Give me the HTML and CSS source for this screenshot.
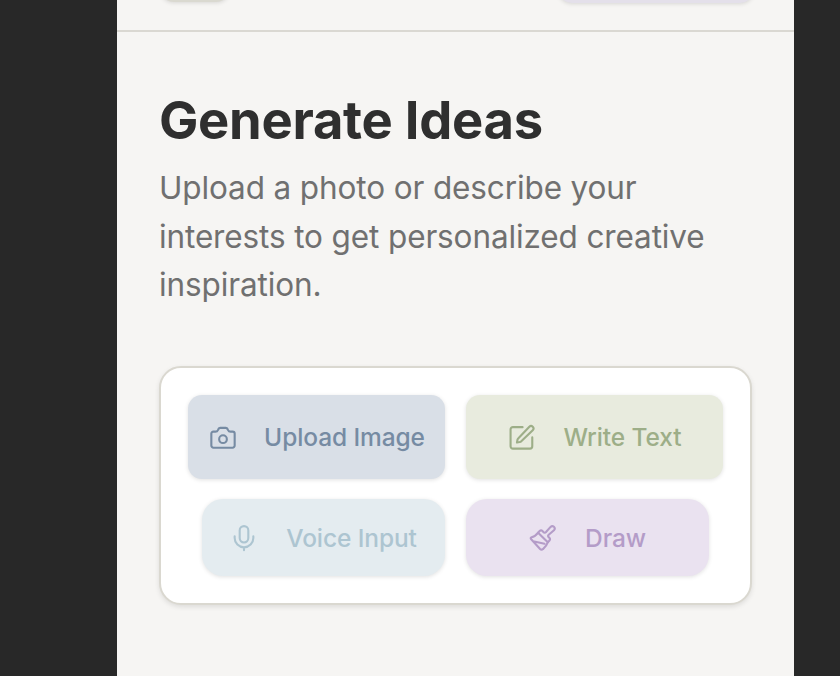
FILE: index.html
```html
<!DOCTYPE html>
<html lang="en">
<head>
<meta charset="utf-8">
<title>Generate Ideas</title>
<link rel="stylesheet" href="styles.css">
</head>
<body>
<div class="app">
  <header class="topbar">
    <div class="chip chip-back"></div>
    <div class="chip chip-action"></div>
  </header>
  <main class="content">
    <h1 class="title">Generate Ideas</h1>
    <p class="intro">Upload a photo or describe your<br>interests to get personalized creative<br>inspiration.</p>
    <section class="card">
      <button class="option upload">
        <svg class="icon" viewBox="0 0 24 24"><path d="M2 8.200A1.700 1.700 0 0 1 3.700 6.500H5.500C6.700 6.500 7.300 6 7.600 5.200C8 4 8.500 3.300 9.500 3.300H14.500C15.500 3.300 16 4 16.400 5.200C16.700 6 17.300 6.500 18.500 6.500H20.300A1.700 1.700 0 0 1 22 8.200V18.500A1.800 1.800 0 0 1 20.200 20.300H3.800A1.800 1.800 0 0 1 2 18.500Z"/><circle cx="12" cy="13" r="3.300"/></svg>
        <span class="label">Upload Image</span>
      </button>
      <button class="option write">
        <svg class="icon" viewBox="0 0 24 24"><path d="M12.500 2.700H4.200A2 2 0 0 0 2.200 4.700V19.100A2 2 0 0 0 4.200 21.100H18.800A2 2 0 0 0 20.800 19.100V11.500"/><path d="M18.300 2.400a2.050 2.050 0 0 1 2.900 2.900L11.400 14.700a3 3 0 0 1-1.400.8l-2.300.4.400-2.300a3 3 0 0 1 .8-1.400Z"/></svg>
        <span class="label">Write Text</span>
      </button>
      <button class="option voice">
        <svg class="icon" viewBox="0 0 24 24"><rect x="8.300" y="1.800" width="7.400" height="14" rx="3.700"/><path d="M4 10.500V12a8 8 0 0 0 16 0V10.500M12 20v2.500"/></svg>
        <span class="label">Voice Input</span>
      </button>
      <button class="option draw">
        <svg class="icon" viewBox="0 0 24 24"><path d="m14.600 6.900 3.900-4.400a1.900 1.900 0 0 1 2.900 2.800l-4.500 3.900a1.500 1.500 0 0 0 0 2.100l.5.500a1.800 1.800 0 0 1 0 2.500l-1.300 1.400-8.300-8.300 1.300-1.300a1.800 1.800 0 0 1 2.500 0l.7.800a1.500 1.500 0 0 0 2.300 0Z"/><path d="M7.800 7.400C6 9.800 4 11 2.200 11.300a.9.900 0 0 0-.5 1.500l7.800 8.600a1.800 1.800 0 0 0 2.500.100c2.300-1.900 3.500-3.800 4.100-5.800M3.500 14.800l9.800 2.100"/></svg>
        <span class="label">Draw</span>
      </button>
    </section>
  </main>
</div>
</body>
</html>
```
FILE: styles.css
```css
* { box-sizing: border-box; }
body { margin: 0; background: #282828; font-family: Inter, sans-serif; }
.app { width: 677px; height: 676px; margin-left: 117px; background: #f6f5f3; overflow: hidden; }
.topbar { height: 32px; padding: 0 42px; display: flex; justify-content: space-between; align-items: flex-start; border-bottom: 2px solid #dad8d2; }
.chip { height: 42px; border-radius: 14px; }
.chip-back { width: 70px; margin: -40px 0 0 1px; background: #dad9d0; box-shadow: 0 1px 4px rgba(0,0,0,.12); }
.chip-action { width: 196px; margin: -39px -2px 0 0; background: #e4e0ea; box-shadow: 0 1px 4px rgba(0,0,0,.12); }
.content { padding: 57px 42px 0; }
.title { margin: 0; font-size: 52.5px; line-height: 62px; font-weight: 700; letter-spacing: -.28px; color: #2f2f2f; white-space: nowrap; }
.intro { margin: 13px 0 0; font-size: 31.5px; line-height: 48.7px; letter-spacing: -.12px; color: #707070; white-space: nowrap; }
.card { display: grid; grid-template-columns: 257px 257px; gap: 20px 21px; align-items: start; margin-top: 55.900px; padding: 27px; height: 239px; border: 2px solid #dad8d0; border-radius: 22px; background: #fff; box-shadow: 0 2px 5px rgba(0,0,0,.1); }
.option { display: flex; align-items: center; justify-content: center; gap: 28px; padding: 1px 0 0; border: 0; font: 500 24.5px/35px Inter, sans-serif; letter-spacing: -.1px; box-shadow: 0 1px 4px rgba(0,0,0,.12); white-space: nowrap; }
.icon { width: 28px; height: 28px; flex: none; fill: none; stroke: currentColor; stroke-width: 1.8; stroke-linecap: round; stroke-linejoin: round; }
.upload, .write { height: 84px; border-radius: 14px; }
.upload .icon, .write .icon { margin: 0 -1px 0 1px; }
.voice, .draw { width: 243px; height: 77px; border-radius: 21px; }
.upload { background: #d9dfe7; color: #768ba3; }
.write { background: #e8ebde; color: #9dae88; }
.voice { justify-self: end; background: #e4ecf0; color: #adc5d1; }
.draw { background: #eae2f0; color: #b49cc8; }
```
